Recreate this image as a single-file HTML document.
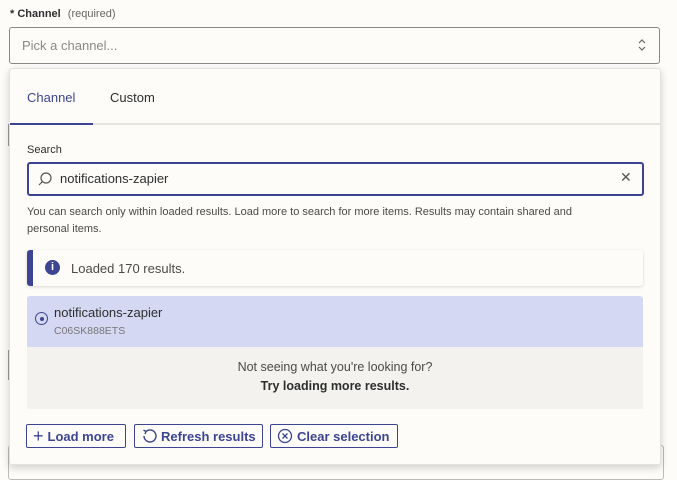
<!DOCTYPE html>
<html><head><style>
body{margin:0;width:677px;height:478px;background:#fdfcf9;font-family:"Liberation Sans",sans-serif;position:relative;overflow:hidden;color:#2d2e2e}
.abs{position:absolute}
.btn{position:absolute;top:424px;border:1px solid #3d4592;border-radius:2px;color:#3d4592;font-size:13px;font-weight:bold;box-sizing:border-box;height:24px;display:flex;align-items:center;gap:4px;padding-left:6px}
</style></head><body>
<div class="abs" style="left:10px;top:8px;font-size:11px;font-weight:bold;color:#2d2e2e">* Channel <span style="font-weight:normal;color:#666;margin-left:4px">(required)</span></div>
<div class="abs" style="left:9px;top:27px;width:649px;height:35px;border:1px solid #8a8985;border-radius:3px;background:#fdfcf9"></div>
<div class="abs" style="left:22px;top:38px;font-size:13px;color:#8a8985">Pick a channel...</div>
<svg class="abs" style="left:636px;top:37px" width="12" height="16" viewBox="0 0 12 16"><path d="M3 6l3-3 3 3M3 10l3 3 3-3" fill="none" stroke="#666" stroke-width="1.2"/></svg>
<div class="abs" style="left:8px;top:124px;width:1px;height:22px;background:#999"></div>
<div class="abs" style="left:660px;top:124px;width:1px;height:22px;background:#999"></div>
<div class="abs" style="left:8px;top:350px;width:1px;height:30px;background:#999"></div>
<div class="abs" style="left:660px;top:350px;width:1px;height:30px;background:#999"></div>
<div class="abs" style="left:8px;top:445px;width:654px;height:33px;border:1px solid #bbb;border-radius:3px"></div>
<div class="abs" style="left:9px;top:68px;width:650px;height:395px;background:#fdfcf9;border:1px solid #e4e2dc;border-radius:3px;box-shadow:0 3px 8px rgba(0,0,0,.18)">
 <div class="abs" style="left:17px;top:21px;font-size:13px;color:#3d4592">Channel</div>
 <div class="abs" style="left:100px;top:21px;font-size:13px;color:#2d2e2e">Custom</div>
 <div class="abs" style="left:0;top:54px;width:650px;height:2px;background:#e6e4df"></div>
 <div class="abs" style="left:0;top:54px;width:83px;height:2px;background:#3d4592"></div>
 <div class="abs" style="left:17px;top:75px;font-size:11px;color:#2d2e2e">Search</div>
 <div class="abs" style="left:17px;top:93px;width:613px;height:30px;border:2px solid #3d4592;border-radius:3px"></div>
 <svg class="abs" style="left:27px;top:102px" width="16" height="16" viewBox="0 0 16 16"><circle cx="9" cy="7" r="5" fill="none" stroke="#555" stroke-width="1.2"/><path d="M5.5 10.5L2 14" stroke="#555" stroke-width="1.2"/></svg>
 <div class="abs" style="left:50px;top:102px;font-size:13px;color:#2d2e2e">notifications-zapier</div>
 <div class="abs" style="left:610px;top:100px;font-size:14px;color:#555">✕</div>
 <div class="abs" style="left:17px;top:135px;width:590px;font-size:11px;line-height:17px;color:#4a4a48">You can search only within loaded results. Load more to search for more items. Results may contain shared and personal items.</div>
 <div class="abs" style="left:17px;top:181px;width:616px;height:36px;background:#fdfcf9;border-radius:3px;box-shadow:0 1px 3px rgba(0,0,0,.15);border-left:6px solid #3d4592;box-sizing:border-box"></div>
 <div class="abs" style="left:35px;top:191px;width:15px;height:15px;border-radius:50%;background:#3d4592;color:#fff;font-size:11px;font-weight:bold;text-align:center;line-height:15px">i</div>
 <div class="abs" style="left:61px;top:192px;font-size:13px;color:#4a4a48">Loaded 170 results.</div>
 <div class="abs" style="left:17px;top:227px;width:616px;height:51px;background:#d4d8f2;border-radius:3px 3px 0 0"></div>
 <div class="abs" style="left:25px;top:243px;width:11px;height:11px;border:1.5px solid #3d4592;border-radius:50%"></div>
 <div class="abs" style="left:30px;top:248px;width:4px;height:4px;border-radius:50%;background:#3d4592"></div>
 <div class="abs" style="left:44px;top:236px;font-size:13px;color:#2d2e2e">notifications-zapier</div>
 <div class="abs" style="left:44px;top:256px;font-size:10.5px;color:#777">C06SK888ETS</div>
 <div class="abs" style="left:17px;top:278px;width:616px;height:62px;background:#f3f2ef"></div>
 <div class="abs" style="left:17px;top:291px;width:616px;text-align:center;font-size:12.5px;color:#4a4a48">Not seeing what you're looking for?</div>
 <div class="abs" style="left:17px;top:310px;width:616px;text-align:center;font-size:12.5px;font-weight:bold;color:#2d2e2e">Try loading more results.</div>
</div>
<div class="btn" style="left:26px;width:100px"><span style="font-size:18px;font-weight:normal">+</span>Load more</div>
<div class="btn" style="left:134px;width:129px"><svg width="16" height="16" viewBox="0 0 16 16"><path d="M5 3.5A6 6 0 1 1 3 8M5 3.5L2.5 2M5 3.5L4 6" fill="none" stroke="#3d4592" stroke-width="1.4"/></svg>Refresh results</div>
<div class="btn" style="left:270px;width:128px"><svg width="16" height="16" viewBox="0 0 16 16"><circle cx="8" cy="8" r="6.5" fill="none" stroke="#3d4592" stroke-width="1.3"/><path d="M5.5 5.5l5 5M10.5 5.5l-5 5" stroke="#3d4592" stroke-width="1.3"/></svg>Clear selection</div>
</body></html>
